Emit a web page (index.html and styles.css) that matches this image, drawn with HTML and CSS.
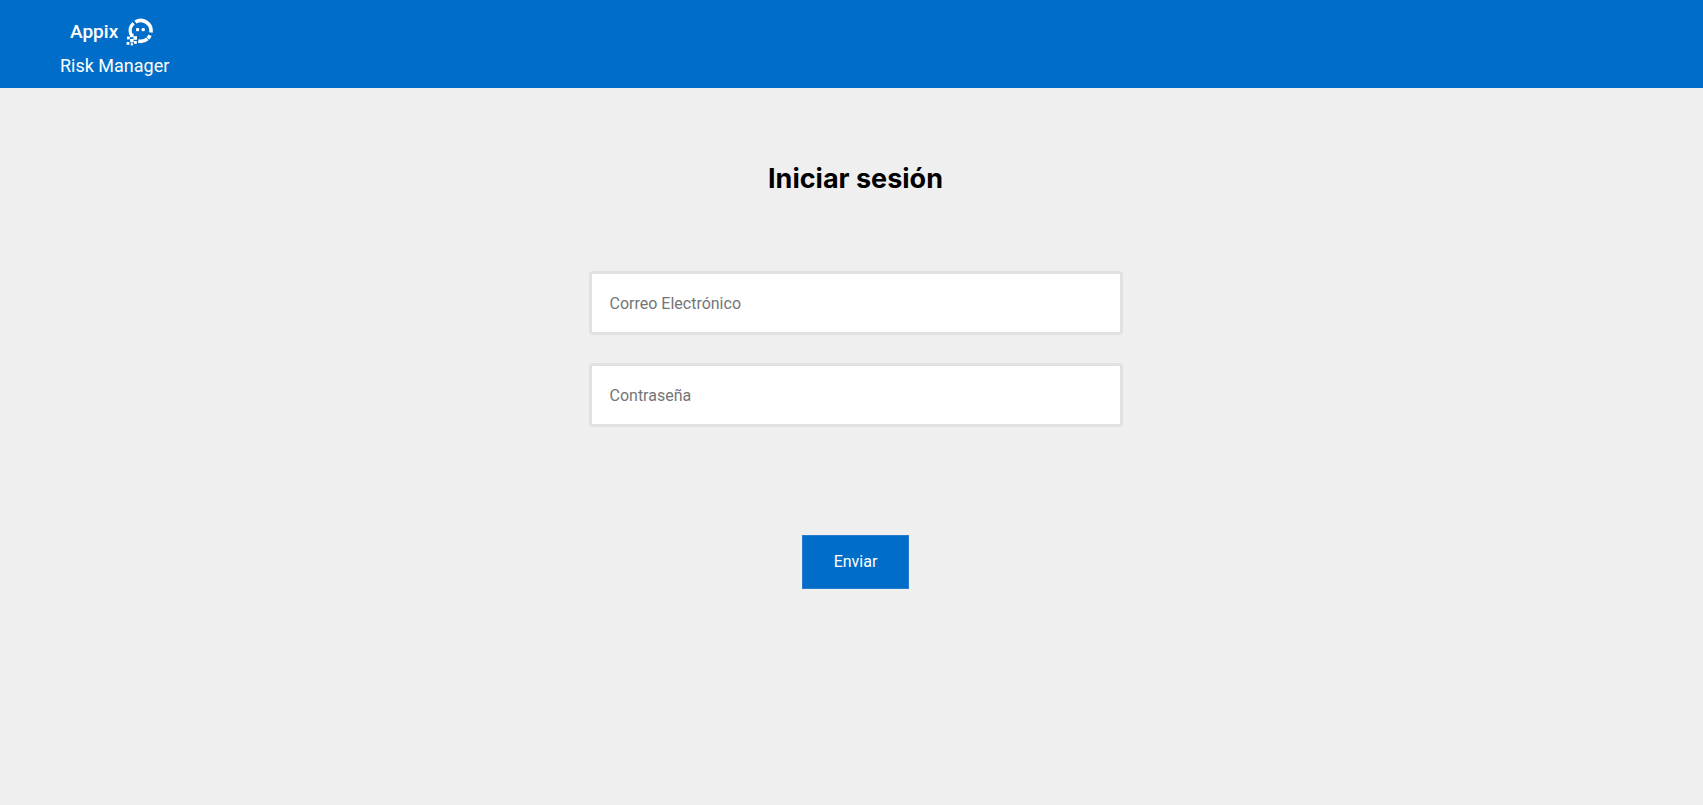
FILE: index.html
```html
<!DOCTYPE html>
<html lang="es">
<head>
  <meta charset="utf-8">
  <meta name="viewport" content="width=device-width, initial-scale=1">
  <title>Appix Risk Manager</title>
  <link rel="stylesheet" href="styles.css">
</head>
<body>
  <header class="header">
    <a class="brand" href="#">
      <span class="brand-row">
        <span class="brand-name">Appix</span>
        <svg class="brand-logo" viewBox="0 0 28 28" aria-hidden="true">
          <g fill="none" stroke="#fff" stroke-width="3.6">
            <path d="M9.4 4A10.3 10.3 0 0 1 24.9 14.5"/>
            <path d="M24 17.2A10.3 10.3 0 0 1 21.8 20.4"/>
            <path d="M21.4 20.9A10.3 10.3 0 0 1 12.3 23"/>
            <path d="M7.6 5.3A10.3 10.3 0 0 0 4.9 16.6" stroke-width="3.2"/>
          </g>
          <g fill="#fff">
            <rect x="10" y="10" width="3.2" height="3.2" rx="1"/>
            <rect x="15.6" y="10" width="3.2" height="3.2" rx="1"/>
            <rect x="4" y="15.6" width="3.6" height="3.6"/>
            <rect x="7.4" y="18.2" width="3.6" height="3.6"/>
            <rect x="1" y="18.6" width="2.8" height="2.8"/>
            <rect x="4.2" y="21" width="3.4" height="3.4"/>
            <rect x="8" y="23" width="2.8" height="2.8"/>
            <rect x="0.6" y="24" width="2.8" height="2.8"/>
            <rect x="4.8" y="25.2" width="2.2" height="2.2"/>
          </g>
        </svg>
      </span>
      <span class="brand-product">Risk Manager</span>
    </a>
  </header>
  <main class="main">
    <h1 class="title">Iniciar sesión</h1>
    <form class="form">
      <input class="field" type="email" placeholder="Correo Electrónico" aria-label="Correo Electrónico">
      <input class="field" type="password" placeholder="Contraseña" aria-label="Contraseña">
      <button class="submit" type="submit">Enviar</button>
    </form>
  </main>
</body>
</html>
```
FILE: styles.css
```css
* {
  box-sizing: border-box;
}

body {
  margin: 0;
  min-height: 100vh;
  background: #efefef;
  color: #000;
  font-family: Roboto, sans-serif;
}

.header {
  display: flex;
  padding: 16px 60px 8px;
  background: #006ec9;
}

.brand {
  display: flex;
  flex-direction: column;
  color: #fff;
  text-decoration: none;
}

.brand-row {
  display: flex;
  align-items: center;
  gap: 8px;
  height: 36px;
  padding: 0 0 4px 10px;
}

.brand-name {
  font-size: 19px;
  font-weight: 500;
  line-height: 28px;
}

.brand-logo {
  width: 28px;
  height: 28px;
}

.brand-product {
  font-size: 18px;
  line-height: 28px;
}

.main {
  display: flex;
  flex-direction: column;
  align-items: center;
  padding: 73px 0 72px 8px;
}

.title {
  margin: 0 0 74px;
  font-family: Inter, sans-serif;
  font-size: 27px;
  font-weight: 700;
  line-height: 36px;
}

.form {
  display: flex;
  flex-direction: column;
  align-items: center;
  gap: 28px;
  width: 100%;
  max-width: 534px;
}

.field {
  width: 100%;
  height: 64px;
  padding: 0 18px;
  border: 3px solid #e1e1e1;
  border-radius: 4px;
  background: #fff;
  color: #333;
  font-family: inherit;
  font-size: 16px;
}

.field::placeholder {
  color: #757575;
  opacity: 1;
}

.submit {
  margin-top: 80px;
  padding: 16px 31px;
  border: 1px solid #2a7bd0;
  background: #006ec9;
  color: #fff;
  font-family: inherit;
  font-size: 16px;
  line-height: 20px;
}
```
